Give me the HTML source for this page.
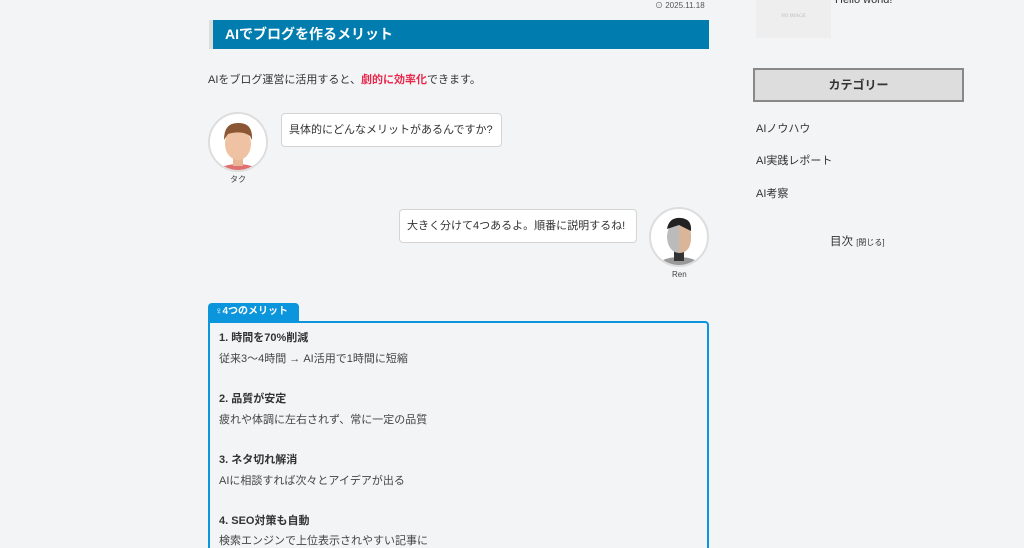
<!DOCTYPE html>
<html><head><meta charset="utf-8"><style>
*{margin:0;padding:0;box-sizing:border-box}
html,body{width:1024px;height:548px;overflow:hidden}
body{background:#f3f4f6;font-family:"Liberation Sans","Noto Sans CJK JP",sans-serif;color:#333;position:relative}
.a{position:absolute;white-space:nowrap}
.bub{position:absolute;background:#fff;border:1px solid #d4d4d4;border-radius:4px;font-size:11px;padding:0 7px;line-height:32px;height:34px;white-space:nowrap;overflow:hidden}
.av{position:absolute;width:60px;height:60px;border-radius:50%;background:#fff;border:2px solid #ddd;overflow:hidden}
.t{font-size:11px;font-weight:bold;color:#333}
.d{font-size:11px;color:#444}
</style></head><body>
<div class="a" style="left:655px;top:0px;font-size:8px;color:#555">⊙ 2025.11.18</div>
<div class="a" style="left:209px;top:20px;width:500px;height:29px;background:#007cae;border-left:4px solid #ddd"></div>
<div class="a" style="left:225px;top:24px;font-size:14px;font-weight:bold;color:#fff;line-height:20px">AIでブログを作るメリット</div>
<div class="a" style="left:208px;top:72px;font-size:11px;line-height:16px">AIをブログ運営に活用すると、<b style="color:#e8264a">劇的に効率化</b>できます。</div>

<div class="av" style="left:208px;top:112px"><svg width="60" height="60"><circle cx="30" cy="30" r="30" fill="#fff"/><ellipse cx="28" cy="62" rx="24" ry="12" fill="#e07070"/><rect x="23" y="40" width="10" height="12" fill="#e9b597"/><ellipse cx="28" cy="30" rx="13" ry="16" fill="#f0c2a4"/><path d="M14 26 Q14 8 29 9 Q43 9 42 26 L40 22 Q32 16 18 20 Z" fill="#8a5634"/></svg></div>
<div class="bub" style="left:281px;top:113px;width:221px">具体的にどんなメリットがあるんですか?</div>
<div class="a" style="left:230px;top:174px;font-size:8px;color:#444">タク</div>

<div class="bub" style="left:399px;top:209px;width:238px">大きく分けて4つあるよ。順番に説明するね!</div>
<div class="av" style="left:649px;top:207px"><svg width="60" height="60"><ellipse cx="28" cy="60" rx="24" ry="12" fill="#999"/><rect x="23" y="40" width="10" height="12" fill="#333"/><ellipse cx="28" cy="28" rx="12" ry="16" fill="#bbb"/><path d="M28 12 Q40 12 40 28 Q40 44 28 44 Z" fill="#d9b59a"/><path d="M16 20 Q18 8 30 9 Q41 10 40 22 L28 16 Z" fill="#222"/></svg></div>
<div class="a" style="left:672px;top:270px;font-size:8px;color:#444">Ren</div>

<div class="a" style="left:208px;top:303px;width:91px;height:20px;background:#0a95dc;border-radius:4px 4px 0 0;color:#fff;font-size:10px;font-weight:bold;line-height:18px;padding-left:7px">♀4つのメリット</div>
<div class="a" style="left:208px;top:321px;width:501px;height:227px;border:2px solid #0a95dc;border-bottom:none;border-radius:0 4px 0 0"></div>
<div class="a t" style="left:219px;top:329px">1. 時間を70%削減</div>
<div class="a d" style="left:219px;top:350px">従来3〜4時間 → AI活用で1時間に短縮</div>
<div class="a t" style="left:219px;top:390px">2. 品質が安定</div>
<div class="a d" style="left:219px;top:411px">疲れや体調に左右されず、常に一定の品質</div>
<div class="a t" style="left:219px;top:451px">3. ネタ切れ解消</div>
<div class="a d" style="left:219px;top:472px">AIに相談すれば次々とアイデアが出る</div>
<div class="a t" style="left:219px;top:512px">4. SEO対策も自動</div>
<div class="a d" style="left:219px;top:532px">検索エンジンで上位表示されやすい記事に</div>

<div class="a" style="left:756px;top:0;width:75px;height:38px;background:#eee;font-size:5px;color:#bbb;text-align:center;line-height:34px;font-family:'Liberation Serif',serif">NO IMAGE</div>
<div class="a" style="left:835px;top:-6px;font-size:11px">Hello world!</div>
<div class="a" style="left:753px;top:68px;width:211px;height:34px;background:#ddd;border:2px solid #888;font-size:12px;font-weight:bold;text-align:center;line-height:30px">カテゴリー</div>
<div class="a" style="left:756px;top:120px;font-size:11px">AIノウハウ</div>
<div class="a" style="left:756px;top:152px;font-size:11px">AI実践レポート</div>
<div class="a" style="left:756px;top:185px;font-size:11px">AI考察</div>
<div class="a" style="left:830px;top:233px;font-size:11.5px">目次 <span style="font-size:8px">[閉じる]</span></div>
</body></html>
